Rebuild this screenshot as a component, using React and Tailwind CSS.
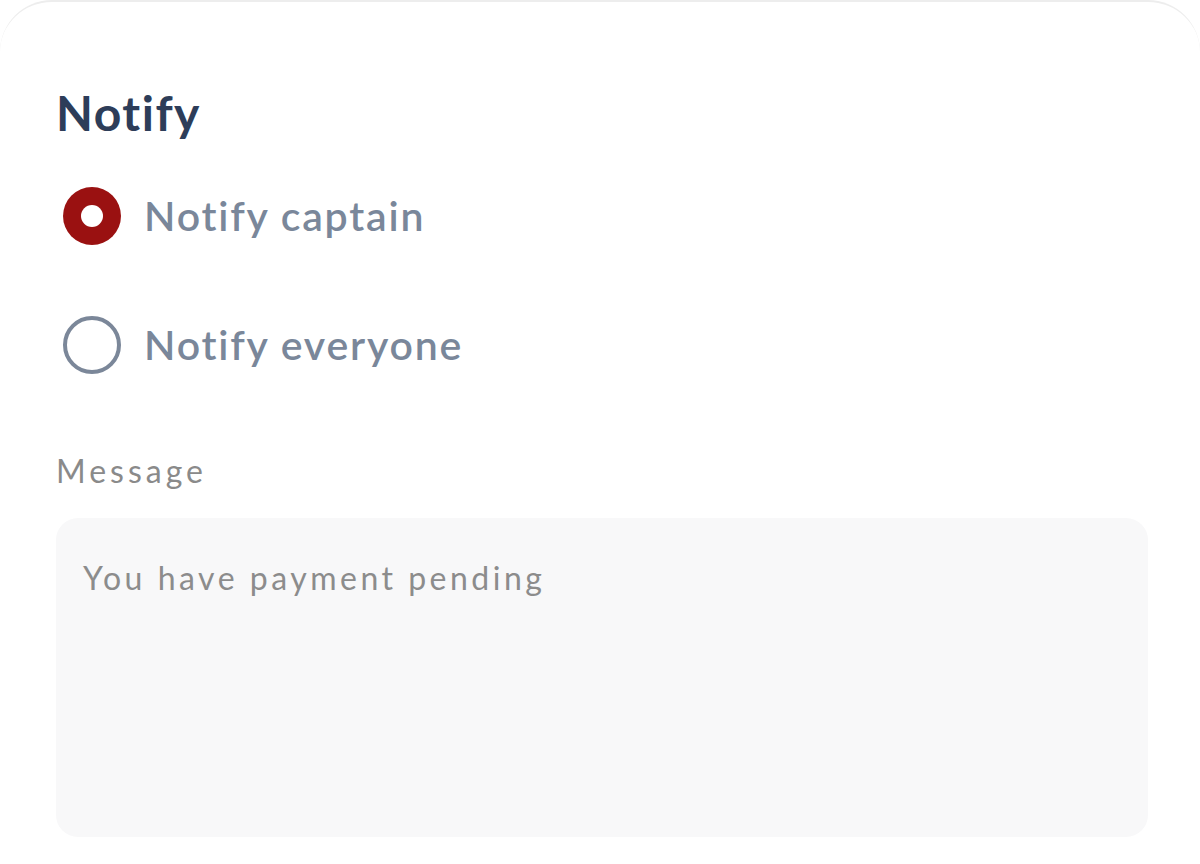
import React, { useState } from 'react';

const options = [
  { id: 'captain', label: 'Notify captain' },
  { id: 'everyone', label: 'Notify everyone' },
];

const Radio = ({ checked }) =>
  checked ? (
    <span className="flex h-[58px] w-[58px] shrink-0 items-center justify-center rounded-full bg-[#9a1111]">
      <span className="h-[22px] w-[22px] rounded-full bg-white" />
    </span>
  ) : (
    <span className="h-[58px] w-[58px] shrink-0 rounded-full border-[4px] border-[#7b8799]" />
  );

export default function App() {
  const [selected, setSelected] = useState('captain');
  const [message, setMessage] = useState('');

  return (
    <div className="min-h-[864px] bg-white font-['Lato','Liberation_Sans',sans-serif]">
      <div className="h-[864px] rounded-t-[52px] border-t-[2px] border-[#ededed] pl-[56px] pr-[52px] pt-[83px]">
        <h2 className="text-[48px] font-bold leading-[56px] tracking-[1.5px] text-[#2d3d59]">Notify</h2>

        <div className="mt-[46px] flex flex-col gap-[71px]">
          {options.map((o) => (
            <button
              key={o.id}
              type="button"
              onClick={() => setSelected(o.id)}
              className="flex items-center gap-[23px] pl-[7px] text-left"
            >
              <Radio checked={selected === o.id} />
              <span className="text-[41px] font-semibold leading-[58px] tracking-[1.8px] text-[#7a879a]">{o.label}</span>
            </button>
          ))}
        </div>

        <label className="mt-[79px] block text-[32px] leading-[36px] tracking-[4px] text-[#8a8a8a]">Message</label>
        <textarea
          value={message}
          onChange={(e) => setMessage(e.target.value)}
          placeholder="You have payment pending"
          className="mt-[29px] block h-[319px] w-full resize-none rounded-[22px] bg-[#f8f8f9] px-[27px] pt-[40px] text-[32px] leading-[40px] tracking-[3.5px] text-[#444] outline-none placeholder:text-[#8c8c8c]"
        />
      </div>
    </div>
  );
}
